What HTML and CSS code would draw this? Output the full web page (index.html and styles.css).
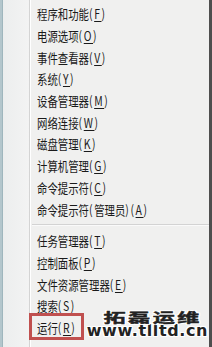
FILE: index.html
```html
<!DOCTYPE html>
<html lang="zh-CN">
<head>
<meta charset="utf-8">
<link rel="stylesheet" href="styles.css">
</head>
<body>
<div class="menu">
  <div class="side"></div>
  <div class="list">
    <div class="group first">
      <div class="item"><span class="label">程序和功能<span class="k">(<u>F</u>)</span></span></div>
      <div class="item"><span class="label">电源选项<span class="k">(<u>O</u>)</span></span></div>
      <div class="item"><span class="label">事件查看器<span class="k">(<u>V</u>)</span></span></div>
      <div class="item"><span class="label">系统<span class="k">(<u>Y</u>)</span></span></div>
      <div class="item"><span class="label">设备管理器<span class="k">(<u>M</u>)</span></span></div>
      <div class="item"><span class="label">网络连接<span class="k">(<u>W</u>)</span></span></div>
      <div class="item"><span class="label">磁盘管理<span class="k">(<u>K</u>)</span></span></div>
      <div class="item"><span class="label">计算机管理<span class="k">(<u>G</u>)</span></span></div>
      <div class="item"><span class="label">命令提示符<span class="k">(<u>C</u>)</span></span></div>
      <div class="item"><span class="label">命令提示符<span class="k">(</span>管理员<span class="k">)(<u>A</u>)</span></span></div>
    </div>
    <div class="sep"></div>
    <div class="group">
      <div class="item"><span class="label">任务管理器<span class="k">(<u>T</u>)</span></span></div>
      <div class="item"><span class="label">控制面板<span class="k">(<u>P</u>)</span></span></div>
      <div class="item"><span class="label">文件资源管理器<span class="k">(<u>E</u>)</span></span></div>
      <div class="item"><span class="label">搜索<span class="k">(<u>S</u>)</span></span></div>
      <div class="item run"><span class="label">运行<span class="k">(<u>R</u>)</span></span><span class="mark"></span></div>
    </div>
  </div>
</div>
<div class="watermark">
  <div class="wm-cn">拓磊运维</div>
  <div class="wm-url">www.tlltd.cn</div>
</div>
</body>
</html>
```

FILE: styles.css
```css
html, body {
  margin: 0;
  padding: 0;
  width: 212px;
  height: 347px;
  overflow: hidden;
  background: #f0f0f0;
}
.menu {
  display: flex;
  height: 347px;
  background: #f0f0ef;
  border-right: 3px solid #4e4e4e;
  box-sizing: border-box;
}
.side {
  width: 29px;
  flex: none;
  background: linear-gradient(to right, #b3c6cc 0, #b3c6cc 2px, #9fb6bd 2px, #9fb6bd 3px, #eceeee 3px, #f3f3f3 100%);
  border-right: 1px solid #d4d4d4;
  box-shadow: 1px 0 0 #ffffff;
  margin-right: 2px;
}
.list {
  flex: 1;
  padding-top: 3px;
}
.item {
  position: relative;
  height: 21.7px;
  display: flex;
  align-items: center;
  padding-left: 5px;
  font-family: "Noto Sans CJK SC", "Noto Sans", sans-serif;
  font-size: 13px;
  color: #1a1a1a;
  white-space: nowrap;
}
.label {
  display: inline-block;
  transform: scaleX(0.8);
  transform-origin: left center;
}
.k {
  letter-spacing: 2px;
}
.label u {
  text-underline-offset: 2px;
  text-decoration-thickness: 1px;
}
.sep {
  height: 10px;
  display: flex;
  align-items: center;
}
.sep::before {
  content: "";
  display: block;
  width: 100%;
  height: 1px;
  background: #d3d3d3;
  box-shadow: 0 1px 0 #fafafa;
}
.mark {
  position: absolute;
  left: -3px;
  top: -4px;
  width: 55px;
  height: 27px;
  border: 3px solid #c0504f;
  box-sizing: border-box;
}
.watermark {
  position: absolute;
  right: 4px;
  bottom: 10px;
  display: flex;
  flex-direction: column;
  align-items: flex-end;
  gap: 2px;
  color: #222222;
  text-shadow: 1px 0 0 #fff, -1px 0 0 #fff, 0 1px 0 #fff, 0 -1px 0 #fff, 1px 1px 0 #fff, -1px -1px 0 #fff, 1px -1px 0 #fff, -1px 1px 0 #fff;
}
.wm-cn {
  font-family: "Noto Sans CJK SC", sans-serif;
  font-weight: 700;
  font-size: 13px;
  line-height: 12px;
  letter-spacing: 1.5px;
  -webkit-text-stroke: 0.4px #222222;
  transform: scaleX(1.7);
  transform-origin: right center;
  margin-right: 6px;
}
.wm-url {
  font-family: "DejaVu Sans", sans-serif;
  font-weight: 700;
  font-size: 16px;
  line-height: 12px;
  letter-spacing: 0.6px;
}
```
